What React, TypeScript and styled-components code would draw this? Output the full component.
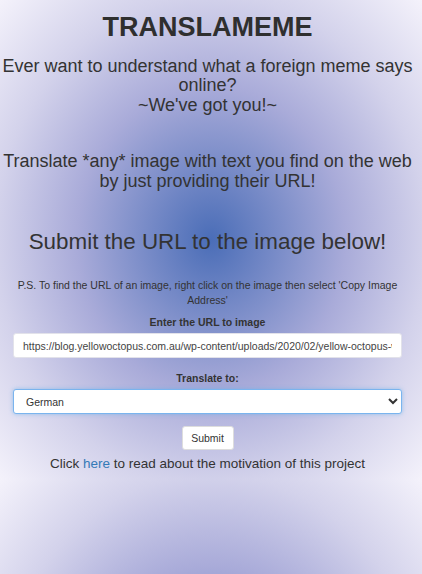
import React from "react";
import styled, { createGlobalStyle } from "styled-components";

const Global = createGlobalStyle`
  html {
    margin: 0;
    background-color: #f3f1fa;
    background-image: radial-gradient(ellipse farthest-corner at 50% 50%, #4a6db7 0%, #a9abd9 45%, #d3d2eb 72%, #f4f2fb 100%);
    background-size: 100% 479px;
    background-repeat: repeat;
  }
  body {
    margin: 0;
    font-family: "Liberation Sans", Arial, Helvetica, sans-serif;
    color: #333;
  }
`;

const Page = styled.main`
  display: flex;
  flex-direction: column;
  padding: 12.5px 7px 0 0;
  text-align: center;
`;

const Title = styled.h1`
  margin: 0;
  font-size: 27px;
  font-weight: 700;
  line-height: 1.1;
  color: #2f2f2f;
`;

const Lead = styled.h4<{ $gap: number }>`
  margin: ${(p) => p.$gap}px 0 0;
  font-size: 18px;
  font-weight: 400;
  line-height: 1.1;
  color: #333;
`;

const Subtitle = styled.h3`
  margin: 38.4px 0 0;
  font-size: 22.4px;
  font-weight: 400;
  line-height: 1.1;
  color: #333;
`;

const Note = styled.p`
  margin: 23.9px 0 0;
  font-size: 10.5px;
  line-height: 14.4px;
  color: #333;
`;

const Form = styled.form`
  display: flex;
  flex-direction: column;
  align-items: stretch;
  margin: 8.9px 13px 0 13px;
`;

const Label = styled.label<{ $gap: number }>`
  margin-top: ${(p) => p.$gap}px;
  font-size: 10.5px;
  font-weight: 700;
  line-height: 12.6px;
  color: #333;
`;

const TextInput = styled.input`
  box-sizing: border-box;
  margin-top: 4.7px;
  height: 25px;
  width: 100%;
  padding: 0 9px;
  border: 1px solid #e2e2ea;
  border-radius: 3px;
  background: #fff;
  font-family: "Liberation Sans", Arial, sans-serif;
  font-size: 10.5px;
  color: #444;
  outline: none;
`;

const Select = styled.select`
  box-sizing: border-box;
  margin-top: 4.6px;
  height: 25px;
  width: 100%;
  padding: 0 8px;
  border: 1px solid #7ab4ee;
  border-radius: 3px;
  background: #fff;
  box-shadow: 0 0 4px rgba(102, 175, 233, 0.6);
  font-family: "Liberation Sans", Arial, sans-serif;
  font-size: 10.5px;
  color: #333;
  outline: none;
`;

const SubmitButton = styled.button`
  align-self: center;
  box-sizing: border-box;
  margin-top: 11.7px;
  height: 24.3px;
  width: 52px;
  padding: 0;
  border: 1px solid #ddd;
  border-radius: 3px;
  background: #fff;
  font-family: "Liberation Sans", Arial, sans-serif;
  font-size: 10.5px;
  color: #333;
`;

const Footer = styled.p`
  margin: 6.2px 0 0;
  font-size: 13.5px;
  line-height: 16.2px;
  color: #333;
`;

const Link = styled.a`
  color: #337ab7;
  text-decoration: none;
`;

export default function App() {
  return (
    <>
      <Global />
      <Page>
        <Title>TRANSLAMEME</Title>
        <Lead $gap={14.4}>
          Ever want to understand what a foreign meme says online?
          <br />
          ~We've got you!~
        </Lead>
        <Lead $gap={35.9}>
          Translate *any* image with text you find on the web by just providing their URL!
        </Lead>
        <Subtitle>Submit the URL to the image below!</Subtitle>
        <Note>
          P.S. To find the URL of an image, right click on the image then select 'Copy Image Address'
        </Note>
        <Form onSubmit={(e) => e.preventDefault()}>
          <Label $gap={0} htmlFor="url">Enter the URL to image</Label>
          <TextInput
            id="url"
            type="text"
            defaultValue="https://blog.yellowoctopus.com.au/wp-content/uploads/2020/02/yellow-octopus-welcome-meme.jpg"
          />
          <Label $gap={13.5} htmlFor="lang">Translate to:</Label>
          <Select id="lang" defaultValue="de">
            <option value="de">German</option>
            <option value="fr">French</option>
            <option value="es">Spanish</option>
            <option value="ja">Japanese</option>
          </Select>
          <SubmitButton type="submit">Submit</SubmitButton>
        </Form>
        <Footer>
          Click <Link href="#">here</Link> to read about the motivation of this project
        </Footer>
      </Page>
    </>
  );
}
